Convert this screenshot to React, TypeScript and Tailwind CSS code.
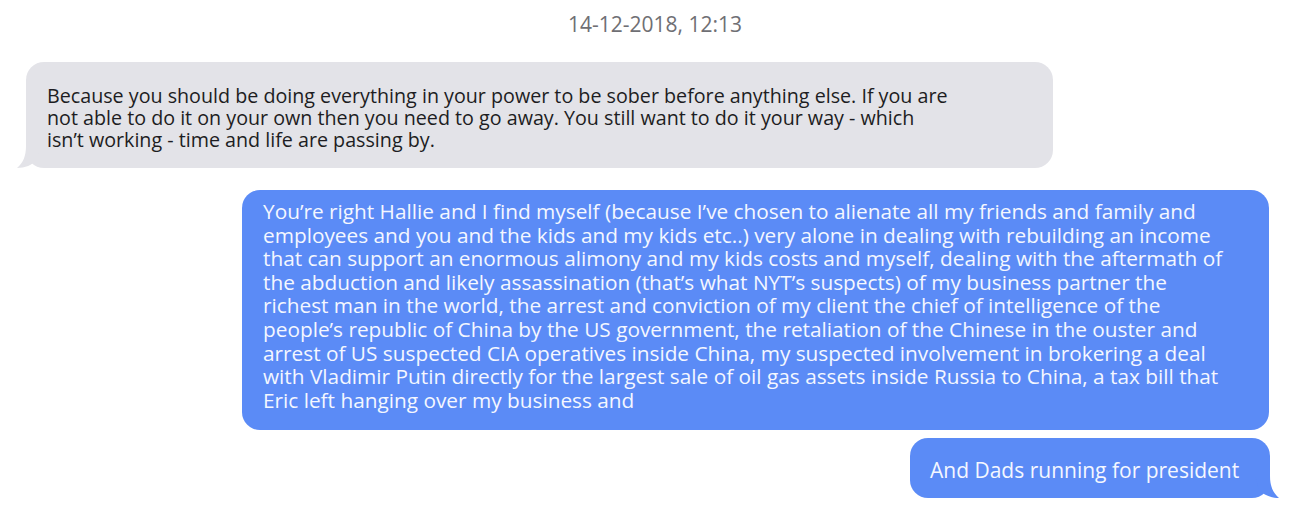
export default function App() {
  return (
    <div className="w-[1293px] h-[514px] bg-white overflow-hidden font-['Open_Sans',sans-serif]">
      <div className="pt-[10px] text-center text-[21px] leading-[28px] text-[#6f6f74] pl-[17px]">
        14-12-2018, 12:13
      </div>

      {/* incoming */}
      <div className="relative ml-[26px] mt-[24px] w-[1027px] h-[106px] rounded-[18px] bg-[#e3e3e8] pl-[21px] pt-[23px] text-[19.7px] leading-[22px] text-[#1d1d22]">
        <svg className="absolute left-[-9px] bottom-0" width="24" height="22" viewBox="0 0 24 22">
          <path d="M9 0 C9 10 6 17 0 22 C8 22 15 19 20 14 L24 0 Z" fill="#e3e3e8" />
        </svg>
        <p className="relative">
          Because you should be doing everything in your power to be sober before anything else. If you are
          <br />
          not able to do it on your own then you need to go away. You still want to do it your way - which
          <br />
          isn’t working - time and life are passing by.
        </p>
      </div>

      {/* outgoing */}
      <div className="ml-[242px] mt-[22px] w-[1027px] h-[240px] rounded-[18px] bg-[#5b8bf6] pl-[21px] pt-[10px] text-[20.8px] leading-[23.6px] text-[#f4f7ff]">
        <p>
          You’re right Hallie and I find myself (because I’ve chosen to alienate all my friends and family and
          <br />
          employees and you and the kids and my kids etc..) very alone in dealing with rebuilding an income
          <br />
          that can support an enormous alimony and my kids costs and myself, dealing with the aftermath of
          <br />
          the abduction and likely assassination (that’s what NYT’s suspects) of my business partner the
          <br />
          richest man in the world, the arrest and conviction of my client the chief of intelligence of the
          <br />
          people’s republic of China by the US government, the retaliation of the Chinese in the ouster and
          <br />
          arrest of US suspected CIA operatives inside China, my suspected involvement in brokering a deal
          <br />
          with Vladimir Putin directly for the largest sale of oil gas assets inside Russia to China, a tax bill that
          <br />
          Eric left hanging over my business and
        </p>
      </div>

      <div className="flex justify-end mt-[8px] pr-[23px]">
        <div className="relative w-[360px] h-[60px] rounded-[18px] bg-[#5b8bf6] flex items-center pl-[20px] pt-[5px] text-[21px] text-[#f4f7ff]">
          <svg className="absolute right-[-9px] bottom-0" width="24" height="22" viewBox="0 0 24 22">
            <path d="M15 0 C15 10 18 17 24 22 C16 22 9 19 4 14 L0 0 Z" fill="#5b8bf6" />
          </svg>
          <span className="relative">And Dads running for president</span>
        </div>
      </div>
    </div>
  );
}
